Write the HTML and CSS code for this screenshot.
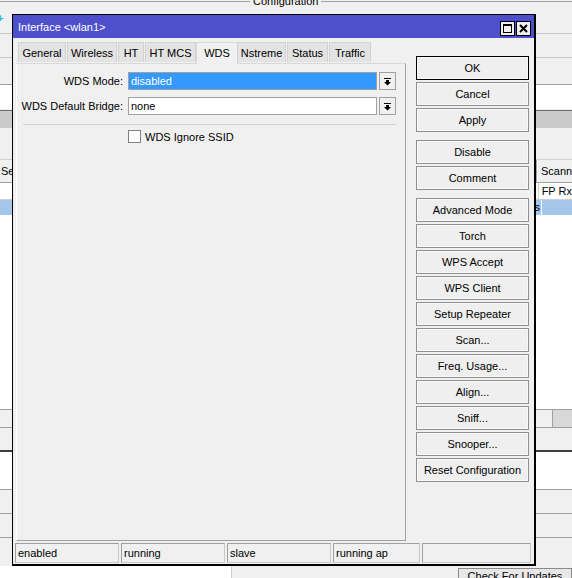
FILE: index.html
```html
<!DOCTYPE html>
<html>
<head>
<meta charset="utf-8">
<title>Interface &lt;wlan1&gt;</title>
<link rel="stylesheet" href="styles.css">
</head>
<body>
<!-- main window behind the interface dialog -->
<div class="desk">
  <fieldset class="cfg">
    <legend>Configuration</legend>
    <span class="plus">+</span>
  </fieldset>
  <div class="bg-line"></div>
  <div class="bg-row"></div>
  <div class="bg-input"></div>
  <div class="bg-gap"></div>
  <div class="bg-band"></div>
  <div class="bg-toolbar"></div>
  <div class="bg-tabs">
    <span class="bg-tab first">Se</span>
    <span class="bg-tab spacer"></span>
    <span class="bg-tab">Scanner</span>
  </div>
  <div class="bg-list">
    <div class="bg-head"><span class="c1"></span><span class="c2">FP Rx</span></div>
    <div class="bg-sel"><span class="c1">s</span><span class="c2"></span></div>
    <div class="bg-body"></div>
  </div>
  <div class="bg-scroll"><span class="sc1"></span><span class="sc2"></span></div>
  <div class="bg-strip"></div>
  <div class="bg-box">
    <div class="bg-white"></div>
    <div class="bg-box-line"></div>
    <div class="bg-box-line"></div>
  </div>
  <div class="bg-foot">
    <span class="foot-field"></span>
    <span class="foot-btn">Check For Updates</span>
  </div>
</div>

<!-- interface dialog -->
<div class="dialog">
  <div class="titlebar">
    <span class="title">Interface &lt;wlan1&gt;</span>
    <span class="tb-btns">
      <span class="tb-btn">
        <svg width="13" height="13" viewBox="0 0 13 13"><rect x="2.5" y="2.5" width="8" height="8" fill="none" stroke="#000"/><rect x="2" y="2" width="9" height="2" fill="#000"/></svg>
      </span>
      <span class="tb-btn">
        <svg width="13" height="13" viewBox="0 0 13 13"><path d="M3 3 L10 10 M10 3 L3 10" stroke="#000" stroke-width="2"/></svg>
      </span>
    </span>
  </div>

  <div class="body">
    <div class="main">
      <div class="tabctl">
        <div class="tabs">
          <span class="tab t-general">General</span>
          <span class="tab t-wireless">Wireless</span>
          <span class="tab t-ht">HT</span>
          <span class="tab t-htmcs">HT MCS</span>
          <span class="tab t-wds active">WDS</span>
          <span class="tab t-nstreme">Nstreme</span>
          <span class="tab t-status">Status</span>
          <span class="tab t-traffic">Traffic</span>
        </div>
        <div class="panel">
          <div class="frow">
            <label class="flabel">WDS Mode:</label>
            <span class="combo">
              <span class="cbox selected">disabled</span>
              <span class="cbtn"><svg width="9" height="9" viewBox="0 0 9 9"><rect x="1" y="1" width="7" height="1" fill="#000"/><path d="M3 3 H6 V5 H8 L4.5 8.5 L1 5 H3 Z" fill="#000"/></svg></span>
            </span>
          </div>
          <div class="frow">
            <label class="flabel">WDS Default Bridge:</label>
            <span class="combo">
              <span class="cbox">none</span>
              <span class="cbtn"><svg width="9" height="9" viewBox="0 0 9 9"><rect x="1" y="1" width="7" height="1" fill="#000"/><path d="M3 3 H6 V5 H8 L4.5 8.5 L1 5 H3 Z" fill="#000"/></svg></span>
            </span>
          </div>
          <div class="sep"></div>
          <div class="crow">
            <span class="check"></span>
            <span>WDS Ignore SSID</span>
          </div>
        </div>
      </div>

      <div class="actions">
        <div class="group">
          <span class="btn default">OK</span>
          <span class="btn">Cancel</span>
          <span class="btn">Apply</span>
        </div>
        <div class="group">
          <span class="btn">Disable</span>
          <span class="btn">Comment</span>
        </div>
        <div class="group">
          <span class="btn">Advanced Mode</span>
          <span class="btn">Torch</span>
          <span class="btn">WPS Accept</span>
          <span class="btn">WPS Client</span>
          <span class="btn">Setup Repeater</span>
          <span class="btn">Scan...</span>
          <span class="btn">Freq. Usage...</span>
          <span class="btn">Align...</span>
          <span class="btn">Sniff...</span>
          <span class="btn">Snooper...</span>
          <span class="btn">Reset Configuration</span>
        </div>
      </div>
    </div>

    <div class="status">
      <span class="cell">enabled</span>
      <span class="cell">running</span>
      <span class="cell">slave</span>
      <span class="cell">running ap</span>
      <span class="cell"></span>
    </div>
  </div>
</div>
</body>
</html>
```

FILE: styles.css
```css
* { box-sizing: border-box; }

html, body { margin: 0; padding: 0; }

body {
  width: 572px;
  height: 578px;
  overflow: hidden;
  position: relative;
  background: #f0f0f0;
  font: 11px "Liberation Sans", Arial, sans-serif;
  color: #000;
}

/* ---------- main window in the background ---------- */
.desk {
  width: 572px;
  height: 578px;
  display: flex;
  flex-direction: column;
}

.cfg {
  margin: -5px 0 0 0;
  padding: 0;
  height: 38px;
  flex: none;
  border: 0;
  border-top: 1px solid #a0a0a0;
  min-width: 0;
}
.cfg legend {
  margin-left: 250px;
  padding: 0 3px;
  line-height: 13px;
}
.plus {
  display: block;
  margin: 5px 0 0 -3px;
  color: #22b8e0;
  font-weight: bold;
  font-size: 11px;
  line-height: 10px;
}

.bg-line { height: 24px; flex: none; border-top: 1px solid #c8c8c8; }
.bg-row { height: 27px; flex: none; border-top: 1px solid #c8c8c8; }
.bg-input {
  height: 25px;
  flex: none;
  border-top: 1px solid #a0a0a0;
  background: #fff;
}
.bg-gap { height: 2px; flex: none; border-bottom: 1px solid #6d6d6d; }
.bg-band { height: 17px; flex: none; background: #c9c9c9; }
.bg-toolbar { height: 32px; flex: none; border-bottom: 1px solid #d0d0d0; }

.bg-tabs {
  height: 23px;
  flex: none;
  display: flex;
  border-bottom: 1px solid #a0a0a0;
}
.bg-tab {
  flex: none;
  padding: 5px 4px 0 1px;
  border-right: 1px solid #a0a0a0;
  white-space: nowrap;
}
.bg-tab.first { width: 24px; }
.bg-tab.spacer { width: 513px; }
.bg-tab:last-child { border-left: 1px solid #fff; padding-left: 3px; border-right: 0; }

.bg-list { display: flex; flex-direction: column; background: #fff; flex: none; }
.bg-head {
  height: 17px;
  display: flex;
  border-bottom: 1px solid #d0d0d0;
}
.bg-head .c1, .bg-sel .c1 { width: 542px; overflow: hidden; white-space: nowrap; text-align: right; padding-right: 1px; }
.bg-head .c1 { border-right: 1px solid #d0d0d0; }
.bg-head .c2 { padding: 2px 0 0 3px; white-space: nowrap; }
.bg-sel { height: 15px; display: flex; background: #a6c7ec; }
.bg-sel .c1 { border-right: 1px solid #fff; line-height: 15px; }
.bg-body { height: 195px; background: #fff; border-bottom: 1px solid #a0a0a0; }

.bg-scroll { height: 18px; flex: none; display: flex; border-bottom: 1px solid #a0a0a0; }
.bg-scroll .sc1 { width: 553px; border-right: 1px solid #a0a0a0; }
.bg-scroll .sc2 { flex: 1; background: #d8d8d8; }

.bg-strip { height: 24px; flex: none; border-bottom: 2px solid #3c3c3c; }
.bg-box { display: flex; flex-direction: column; flex: none; }
.bg-white { height: 38px; background: #fff; border-bottom: 1px solid #a0a0a0; }
.bg-box-line { height: 24px; border-bottom: 1px solid #a0a0a0; }

.bg-foot {
  margin-top: auto;
  height: 12px;
  flex: none;
  display: flex;
  justify-content: space-between;
  align-items: flex-start;
  overflow: hidden;
}
.foot-field {
  width: 232px;
  height: 12px;
  background: #fff;
  border-right: 1px solid #d0d0d0;
}
.foot-btn {
  width: 114px;
  height: 20px;
  margin-top: 2px;
  border: 1px solid #8a8a8a;
  background: #e8e8e8;
  text-align: center;
  padding-top: 1px;
}

/* ---------- interface dialog ---------- */
.dialog {
  position: absolute;
  left: 12px;
  top: 14px;
  width: 524px;
  height: 552px;
  border: 1px solid #000;
  border-right-width: 2px;
  border-bottom-width: 2px;
  background: #f0f0f0;
  display: flex;
  flex-direction: column;
}

.titlebar {
  height: 23px;
  flex: none;
  background: #4e4fcb;
  color: #fff;
  display: flex;
  align-items: center;
  justify-content: space-between;
  padding: 0 3px 0 5px;
}
.title { font-size: 11px; margin-top: 1px; }
.tb-btns { display: flex; gap: 1px; margin-top: 3px; }
.tb-btn {
  width: 15px;
  height: 15px;
  border: 1px solid #000;
  background: #f0f0f0;
  display: flex;
  align-items: center;
  justify-content: center;
}
.tb-btn svg { display: block; }

.body {
  flex: 1;
  display: flex;
  flex-direction: column;
  padding: 3px 5px 1px 3px;
}

.main { display: flex; gap: 10px; height: 500px; }

.tabctl { width: 390px; display: flex; flex-direction: column; }

.tabs {
  height: 22px;
  display: flex;
  align-items: flex-end;
  padding-left: 2px;
  position: relative;
  z-index: 1;
}
.tab {
  height: 20px;
  margin-bottom: 1px;
  background: #e3e3e3;
  border: 1px solid #d2d2d2;
  border-bottom: 0;
  margin-right: 1px;
  text-align: center;
  line-height: 20px;
  white-space: nowrap;
}
.tab.active {
  height: 22px;
  margin: 0 -1px -1px -1px;
  background: #f0f0f0;
  border-color: #d9d9d9;
  line-height: 20px;
  padding-bottom: 2px;
}
.t-general { width: 48px; }
.t-wireless { width: 50px; }
.t-ht { width: 26px; }
.t-htmcs { width: 51px; }
.t-wds { width: 42px; }
.t-nstreme { width: 49px; }
.t-status { width: 41px; }
.t-traffic { width: 42px; }

.panel {
  flex: 1;
  border: 1px solid #d9d9d9;
  border-right-color: #a0a0a0;
  border-bottom-color: #a0a0a0;
  border-left-color: #fff;
  padding-top: 8px;
  display: flex;
  flex-direction: column;
}

.frow { display: flex; align-items: center; height: 18px; margin-bottom: 7px; }
.flabel { width: 106px; text-align: right; margin-right: 5px; white-space: nowrap; }
.combo { display: flex; gap: 2px; }
.cbox {
  width: 249px;
  height: 18px;
  border: 1px solid #a0a0a0;
  background: #fff;
  padding-left: 2px;
  line-height: 16px;
}
.cbox.selected { background: #3399ff; color: #fff; }
.cbtn {
  width: 17px;
  height: 18px;
  border: 1px solid #a0a0a0;
  background: #f0f0f0;
  display: flex;
  align-items: center;
  justify-content: center;
}
.cbtn svg { display: block; }

.sep {
  margin: 2px 0 0 6px;
  width: 373px;
  height: 1px;
  background: #d4d4d4;
}

.crow {
  display: flex;
  align-items: center;
  gap: 4px;
  margin: 5px 0 0 111px;
  height: 13px;
}
.check {
  width: 13px;
  height: 13px;
  border: 1px solid #808080;
  background: #fff;
}

.actions {
  width: 113px;
  margin-top: 15px;
  display: flex;
  flex-direction: column;
  gap: 8px;
}
.group { display: flex; flex-direction: column; gap: 2px; }
.btn {
  height: 24px;
  border: 1px solid #8f8f8f;
  background: #efefef;
  box-shadow: inset 0 0 0 1px #f8f8f8;
  text-align: center;
  line-height: 22px;
  white-space: nowrap;
}
.btn.default { border-color: #000; }

.status {
  margin: 2px 0 0 -1px;
  height: 20px;
  display: grid;
  grid-template-columns: 104px 104px 104px 87px 109px;
  gap: 2px;
}
.cell {
  border: 1px solid #a0a0a0;
  border-right-color: #c8c8c8;
  border-bottom-color: #c8c8c8;
  padding-left: 2px;
  line-height: 18px;
  white-space: nowrap;
  overflow: hidden;
}
```
